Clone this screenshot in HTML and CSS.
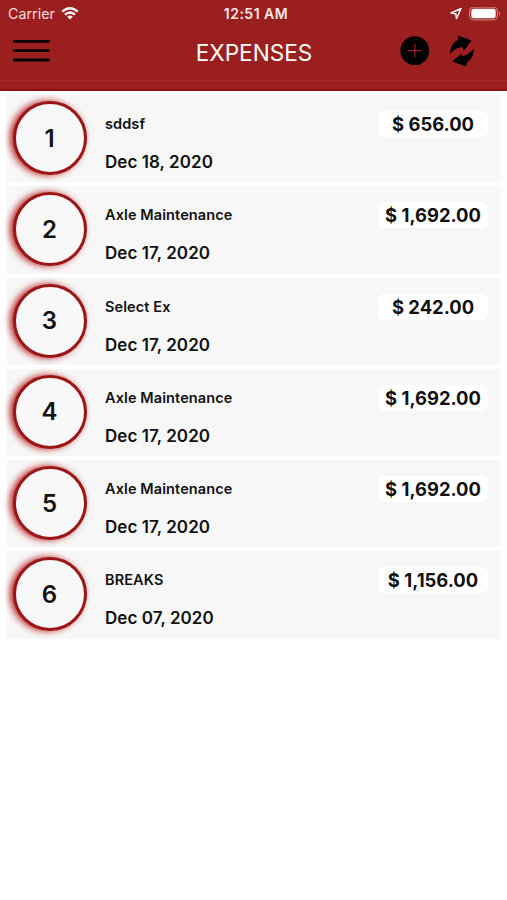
FILE: index.html
```html
<!DOCTYPE html>
<html lang="en">
<head>
<meta charset="utf-8">
<title>Expenses</title>
<link rel="stylesheet" href="styles.css">
</head>
<body>
<header class="header">
  <div class="status">
    <div class="carrier"><span>Carrier</span>
      <svg width="18" height="14" viewBox="0 0 18 14" fill="none" stroke="#fff" stroke-width="2.3"><path d="M1.2 4.7Q9-2.2 16.8 4.7M4 7.7Q9 3.3 14 7.7"/><path d="M6.2 9.7Q9 7.3 11.8 9.7L9 12.5z" fill="#fff" stroke="none"/></svg>
    </div>
    <div class="time">12:51 AM</div>
    <div class="indicators">
      <svg width="12" height="12" viewBox="0 0 12 12" fill="none" stroke="#fff" stroke-width="1.5" stroke-linejoin="round"><path d="M11 .5L1 5L5.8 5.7L6.5 10.5z"/></svg>
      <svg width="32" height="14" viewBox="0 0 32 14"><rect x=".6" y=".1" width="27.8" height="12.8" rx="3.8" fill="none" stroke="#d58e8c" stroke-width="1"/><rect x="2.3" y="1.8" width="24.4" height="9.4" rx="2.2" fill="#fff"/><path d="M30 4.2Q32 6.5 30 8.8z" fill="#d58e8c"/></svg>
    </div>
  </div>
  <div class="nav">
    <svg class="menu" width="38" height="24" viewBox="0 0 38 24" stroke="#080000" stroke-width="2.8" stroke-linecap="round"><path d="M2.2 2.3H36.6M2.2 11.6H36.6M2.2 21H36.6"/></svg>
    <h1 class="title">EXPENSES</h1>
    <div class="actions">
      <svg width="30" height="30" viewBox="0 0 30 30"><circle cx="14.8" cy="14.7" r="14.4"/><path d="M8 14.7H21.6M14.8 8V21.5" stroke="#9b1f1e" stroke-width="1.2"/></svg>
      <svg width="26" height="32" viewBox="0 0 26 32"><path d="M1 19Q1.2 8.5 9.5 4.5L8.8.5L22.5 5.5L15 15.8L13.3 12Q6 12.5 1 19z"/><path d="M24.8 13.8Q25 23 18.3 27L17 31.5L3.3 26.5L12 19L13.8 21.3Q20.5 19 24.8 13.8z"/></svg>
    </div>
  </div>
</header>
<main class="list">
  <article class="row"><div class="badge">1</div><div class="details"><div class="name">sddsf</div><div class="date">Dec 18, 2020</div></div><div class="amount">$ 656.00</div></article>
  <article class="row"><div class="badge">2</div><div class="details"><div class="name">Axle Maintenance</div><div class="date">Dec 17, 2020</div></div><div class="amount">$ 1,692.00</div></article>
  <article class="row"><div class="badge">3</div><div class="details"><div class="name">Select Ex</div><div class="date">Dec 17, 2020</div></div><div class="amount">$ 242.00</div></article>
  <article class="row"><div class="badge">4</div><div class="details"><div class="name">Axle Maintenance</div><div class="date">Dec 17, 2020</div></div><div class="amount">$ 1,692.00</div></article>
  <article class="row"><div class="badge">5</div><div class="details"><div class="name">Axle Maintenance</div><div class="date">Dec 17, 2020</div></div><div class="amount">$ 1,692.00</div></article>
  <article class="row"><div class="badge">6</div><div class="details"><div class="name">BREAKS</div><div class="date">Dec 07, 2020</div></div><div class="amount">$ 1,156.00</div></article>
</main>
</body>
</html>
```
FILE: styles.css
```css
* { box-sizing: border-box; }
body { margin: 0; min-height: 900px; background: #fff; color: #111; font-family: Inter, "Liberation Sans", sans-serif; }
svg { display: block; flex: none; }
.header { height: 91px; padding-bottom: 10px; background: linear-gradient(#9b1f1e 80px, #a52c2a 80px, #a52c2a 81px, #9b1f1e 81px, #9b1f1e 89px, #8f100d 89px); color: #fff; }
.status { display: grid; grid-template-columns: 1fr auto 1fr; height: 27px; padding: 0 6px 0 8px; align-items: center; line-height: 27px; }
.carrier { display: flex; align-items: center; gap: 6px; color: #f6dcdb; font-size: 14.3px; }
.time { font-size: 14px; letter-spacing: .5px; font-weight: 600; color: #f9e8e7; padding-left: 3px; }
.indicators { display: flex; justify-content: flex-end; align-items: center; gap: 7px; }
.nav { display: grid; grid-template-columns: 1fr auto 1fr; align-items: center; height: 48px; padding: 0 32px 0 12px; }
.title { margin: 4px 0 0 21px; font-size: 22.6px; line-height: 28px; font-weight: 400; }
.actions { display: flex; justify-content: flex-end; align-items: center; gap: 19px; }
.list { display: flex; flex-direction: column; gap: 4px; padding: 4px 7px 0; }
.row { display: flex; height: 87.3px; padding: 6px 12px 0 6px; background: #f7f7f7; }
.badge { display: flex; flex: none; align-items: center; justify-content: center; width: 74px; height: 74px; padding-right: 1px; border: 3px solid #9b1616; border-radius: 50%; background: #f8f8f8; box-shadow: -3px 0 7px #b52020; font-size: 24px; font-weight: 600; }
.details { flex: 1; padding: 13px 0 0 18px; font-weight: 600; }
.name { font-size: 14.5px; letter-spacing: .1px; line-height: 20px; }
.date { margin-top: 18px; font-size: 17px; letter-spacing: .06px; line-height: 20px; }
.amount { width: 110px; height: 26px; margin-top: 10px; border-radius: 6px; background: #fff; font-size: 18.4px; font-weight: 650; line-height: 26px; text-align: center; }
```
